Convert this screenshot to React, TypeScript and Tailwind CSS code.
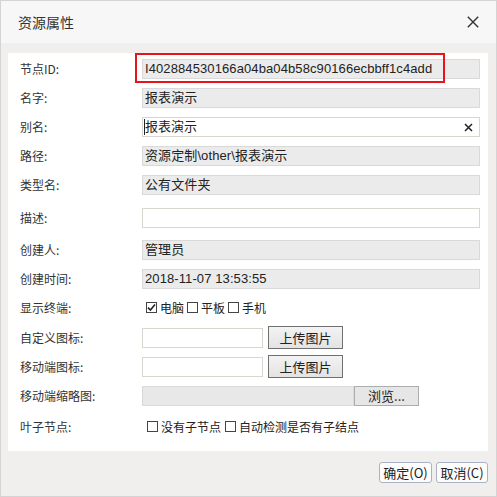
import type { ReactNode } from 'react';

const LABEL_FONT = "font-['Noto_Sans_CJK_SC','Noto_Sans',sans-serif]";
const VALUE_FONT = "font-['Liberation_Sans','Noto_Sans_CJK_SC',sans-serif]";

function Row({ label, extra = '', children }: { label: string; extra?: string; children: ReactNode }) {
  return (
    <div className={`flex h-[29px] items-center ${extra}`}>
      <div className={`w-[122px] shrink-0 text-[12px] text-[#333] ${LABEL_FONT}`}>{label}</div>
      <div className="flex min-w-0 flex-1 items-center">{children}</div>
    </div>
  );
}

function ReadOnly({ value }: { value: string }) {
  return (
    <div
      className={`flex h-[20px] w-full items-center border border-[#d9d9d9] bg-[#ebebeb] pl-[2px] text-[13px] leading-none tracking-[0.1px] text-[#222] ${VALUE_FONT}`}
    >
      {value}
    </div>
  );
}

function Check({ checked, label }: { checked?: boolean; label: string }) {
  return (
    <span className="flex items-center">
      <span className="flex h-[11px] w-[11px] items-center justify-center border border-[#444] bg-white">
        {checked && (
          <svg width="9" height="9" viewBox="0 0 9 9">
            <path d="M1 4.6 L3.4 7 L8 1.6" fill="none" stroke="#222" strokeWidth="1.6" />
          </svg>
        )}
      </span>
      <span className={`ml-[3px] text-[12px] text-[#222] ${LABEL_FONT}`}>{label}</span>
    </span>
  );
}

function UploadButton() {
  return (
    <button
      className={`ml-[5px] flex h-[23px] w-[75px] items-center justify-center border border-[#707070] bg-gradient-to-b from-[#f3f3f3] to-[#e3e3e3] text-[13px] text-[#222] ${LABEL_FONT}`}
    >
      上传图片
    </button>
  );
}

export default function App() {
  return (
    <div className="flex h-[497px] w-[497px] flex-col border border-[#d4d4d4] bg-[#f0efed]">
      {/* 헤더 */}
      <div className="flex h-[42px] shrink-0 items-center justify-between bg-[#f7f7f7] pl-[17px] pr-[17px]">
        <span className={`text-[14px] text-[#333] ${LABEL_FONT}`}>资源属性</span>
        <svg width="12" height="12" viewBox="0 0 12 12">
          <path d="M0.8 0.8 L11.2 11.2 M11.2 0.8 L0.8 11.2" stroke="#333" strokeWidth="1.4" />
        </svg>
      </div>

      <div className="flex flex-1 flex-col pl-[7px] pr-[8px] pt-[10px]">
        <div className="relative flex h-[398px] w-[480px] flex-col bg-white pl-[12px] pr-[8px] pt-[1px]">
          <Row label="节点ID:">
            <ReadOnly value="I402884530166a04ba04b58c90166ecbbff1c4add" />
          </Row>
          <Row label="名字:">
            <ReadOnly value="报表演示" />
          </Row>
          <Row label="别名:">
            <div
              className={`relative flex h-[20px] w-full items-center border border-[#d9d6d0] bg-white pl-[2px] text-[13px] leading-none text-[#222] ${VALUE_FONT}`}
            >
              <span className="absolute left-[1px] top-[1px] h-[16px] w-px bg-[#222]" />
              报表演示
              <svg className="absolute right-[6px] top-[5px]" width="9" height="9" viewBox="0 0 9 9">
                <path d="M1 1 L8 8 M8 1 L1 8" stroke="#222" strokeWidth="1.5" />
              </svg>
            </div>
          </Row>
          <Row label="路径:">
            <ReadOnly value="资源定制\other\报表演示" />
          </Row>
          <Row label="类型名:">
            <ReadOnly value="公有文件夹" />
          </Row>
          <Row label="描述:" extra="mt-[4px]">
            <div className="h-[20px] w-full border border-[#d9d6d0] bg-white" />
          </Row>
          <Row label="创建人:" extra="mt-[3px]">
            <ReadOnly value="管理员" />
          </Row>
          <Row label="创建时间:">
            <ReadOnly value="2018-11-07 13:53:55" />
          </Row>
          <Row label="显示终端:">
            <div className="flex items-center gap-[3px] pl-[4px]">
              <Check checked label="电脑" />
              <Check label="平板" />
              <Check label="手机" />
            </div>
          </Row>
          <Row label="自定义图标:" extra="mt-[1px]">
            <div className="h-[20px] w-[121px] border border-[#d9d6d0] bg-white" />
            <UploadButton />
          </Row>
          <Row label="移动端图标:">
            <div className="h-[20px] w-[121px] border border-[#d9d6d0] bg-white" />
            <UploadButton />
          </Row>
          <Row label="移动端缩略图:">
            <div className="h-[20px] w-[212px] border border-[#d9d9d9] bg-[#e8e8e8]" />
            <button
              className={`flex h-[20px] w-[65px] items-center justify-center border border-[#adadad] bg-[#e6e6e6] text-[13px] text-[#222] ${LABEL_FONT}`}
            >
              浏览...
            </button>
          </Row>
          <Row label="叶子节点:" extra="mt-[2px]">
            <div className="flex items-center gap-[4px] pl-[5px]">
              <Check label="没有子节点" />
              <Check label="自动检测是否有子结点" />
            </div>
          </Row>

          {/* 강조 표시 박스 */}
          <div className="pointer-events-none absolute left-[127px] top-0 h-[30px] w-[310px] border-2 border-[#e8141b]" />
        </div>

        <div className="flex justify-end gap-[4px] pt-[11px]">
          <button
            className={`flex h-[21px] w-[53px] items-center justify-center rounded-[3px] border border-[#a9b3c1] bg-[#fcfcfc] text-[13px] text-[#222] ${LABEL_FONT}`}
          >
            确定(O)
          </button>
          <button
            className={`flex h-[21px] w-[52px] items-center justify-center rounded-[3px] border border-[#a9b3c1] bg-[#fcfcfc] text-[13px] text-[#222] ${LABEL_FONT}`}
          >
            取消(C)
          </button>
        </div>
      </div>
    </div>
  );
}
